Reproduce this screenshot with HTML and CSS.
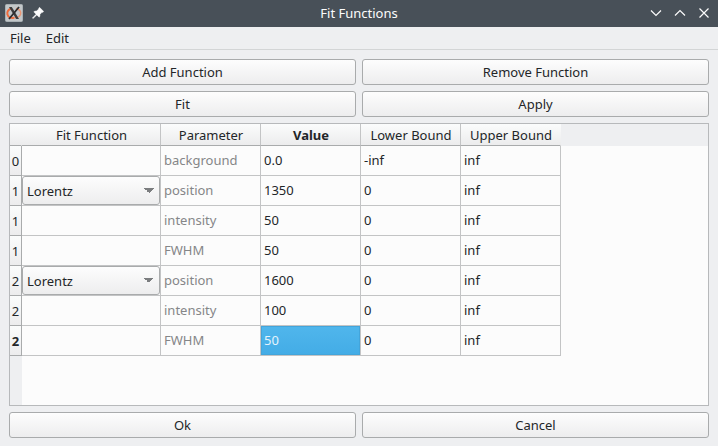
FILE: index.html
```html
<!DOCTYPE html>
<html lang="en">
<head>
<meta charset="utf-8">
<title>Fit Functions</title>
<link rel="stylesheet" href="styles.css">
</head>
<body>
<header class="titlebar">
  <div class="title-group">
    <svg class="app-icon" width="18" height="18" viewBox="0 0 18 18" aria-hidden="true">
      <rect x="0.5" y="0.5" width="17" height="17" rx="1" fill="#c3c7c9" stroke="#a9b0b4"/>
      <path d="M7 4.500C3.500 5 1.800 7.500 2.400 10.300C3 13 6 14.300 9 13.800" fill="none" stroke="#f06a3a" stroke-width="2"/>
      <path d="M11 4.500C14.500 5.200 16.200 7.500 15.600 10C15 12.500 12 14 9 13.800" fill="none" stroke="#ea9472" stroke-width="1.500"/>
      <path d="M4 3H6.800L14 15H11.200Z" fill="#3c3c3e"/>
      <path d="M14 3L4 15" stroke="#2c2c2e" stroke-width="1.800"/>
    </svg>
    <button class="title-button" aria-label="Keep above">
      <svg width="12" height="12" viewBox="0 0 12 12"><path d="M7.500 0.300L11.700 4.500L10.800 5.400L10.200 5.100L7.900 7.400C8.100 8.700 7.800 9.600 7.200 10.200L4.800 7.900L1 11.600L0.400 11L4.100 7.200L1.800 4.800C2.400 4.200 3.400 3.900 4.600 4.100L6.900 1.800L6.600 1.200Z" fill="#fcfcfc" stroke="#fcfcfc" stroke-width="0.500"/></svg>
    </button>
  </div>
  <h1 class="title">Fit Functions</h1>
  <div class="title-group title-group-end">
    <button class="title-button" aria-label="Minimize"><svg width="12" height="12" viewBox="0 0 12 12"><path d="M1 3.500L6 8.500L11 3.500"/></svg></button>
    <button class="title-button" aria-label="Maximize"><svg width="12" height="12" viewBox="0 0 12 12"><path d="M1 8.500L6 3.500L11 8.500"/></svg></button>
    <button class="title-button" aria-label="Close"><svg width="12" height="12" viewBox="0 0 12 12"><path d="M1.500 1.500L10.500 10.500M10.500 1.500L1.500 10.500"/></svg></button>
  </div>
</header>
<nav class="menubar">
  <button class="menu">File</button>
  <button class="menu">Edit</button>
</nav>
<main class="content">
  <div class="actions">
    <button class="button">Add Function</button>
    <button class="button">Remove Function</button>
    <button class="button">Fit</button>
    <button class="button">Apply</button>
  </div>
  <div class="table-frame">
    <table class="grid">
      <colgroup><col class="col-index"><col class="col-function"><col class="col-value" span="4"></colgroup>
      <thead>
        <tr><td class="corner"></td><th scope="col">Fit Function</th><th scope="col">Parameter</th><th scope="col" class="current">Value</th><th scope="col">Lower Bound</th><th scope="col">Upper Bound</th></tr>
      </thead>
      <tbody>
        <tr><th scope="row">0</th><td></td><td class="name">background</td><td>0.0</td><td>-inf</td><td>inf</td></tr>
        <tr><th scope="row">1</th><td class="choice"><select class="combo" aria-label="Fit function 1"><option>Lorentz</option></select></td><td class="name">position</td><td>1350</td><td>0</td><td>inf</td></tr>
        <tr><th scope="row">1</th><td></td><td class="name">intensity</td><td>50</td><td>0</td><td>inf</td></tr>
        <tr><th scope="row">1</th><td></td><td class="name">FWHM</td><td>50</td><td>0</td><td>inf</td></tr>
        <tr><th scope="row">2</th><td class="choice"><select class="combo" aria-label="Fit function 2"><option>Lorentz</option></select></td><td class="name">position</td><td>1600</td><td>0</td><td>inf</td></tr>
        <tr><th scope="row">2</th><td></td><td class="name">intensity</td><td>100</td><td>0</td><td>inf</td></tr>
        <tr><th scope="row" class="current">2</th><td></td><td class="name">FWHM</td><td class="selected">50</td><td>0</td><td>inf</td></tr>
      </tbody>
    </table>
    <div class="header-rest"></div>
    <div class="index-rest"></div>
  </div>
  <div class="actions">
    <button class="button">Ok</button>
    <button class="button">Cancel</button>
  </div>
</main>
</body>
</html>
```
FILE: styles.css
```css
* {
  box-sizing: border-box;
}

body {
  display: flex;
  flex-direction: column;
  min-height: 100vh;
  margin: 0;
  background: #eeeff1;
  color: #232629;
  font: 13px/18px "Noto Sans", sans-serif;
}

button,
select {
  font: inherit;
  color: inherit;
}

.titlebar {
  display: grid;
  grid-template-columns: 1fr auto 1fr;
  align-items: center;
  height: 27px;
  padding: 0 8px 2px;
  background: #485058;
  color: #fcfcfc;
}

.title-group {
  display: flex;
  align-items: center;
  gap: 9px;
  margin-left: -3px;
}

.title-group-end {
  justify-content: flex-end;
  gap: 12px;
  margin-left: 0;
}

.title {
  margin: 0;
  font-size: 13px;
  font-weight: 400;
}

.title-button {
  display: flex;
  padding: 0;
  border: 0;
  background: none;
}

.title-group-end path {
  fill: none;
  stroke: #fcfcfc;
  stroke-width: 1.2;
}

.menubar {
  display: flex;
  height: 23px;
  padding: 0 2px;
  border-bottom: 1px solid #d3d5d6;
}

.menu {
  padding: 0 8px;
  border: 0;
  background: none;
}

.menu + .menu {
  padding-left: 7px;
}

.content {
  flex: 1;
  display: flex;
  flex-direction: column;
  gap: 6px;
  padding: 9px 9px 8px;
}

.actions {
  display: grid;
  grid-template-columns: 1fr 1fr;
  gap: 6px;
}

.button {
  height: 26px;
  padding: 0 8px;
  border: 1px solid #a9abac;
  border-radius: 3px;
  background: linear-gradient(#fdfdfd, #ededee);
}

.table-frame {
  flex: 1;
  display: grid;
  grid-template-columns: auto 1fr;
  grid-template-rows: 22px auto 1fr;
  border: 1px solid #b7b9bb;
  background: #fcfcfc;
}

.grid {
  grid-row: 1 / 3;
  width: 551px;
  table-layout: fixed;
  border-collapse: separate;
  border-spacing: 0;
}

.col-index {
  width: 12px;
}

.col-function {
  width: 139px;
}

.col-value {
  width: 100px;
}

.grid th,
.grid td {
  padding: 0;
  font-weight: 400;
  border: solid #c3c4c5;
  border-width: 0 1px 1px 0;
}

.grid thead th,
.grid .corner {
  height: 22px;
  background: linear-gradient(#fbfcfc, #ececed);
  border-bottom-color: #a9abac;
}

.grid thead th {
  padding-left: 1px;
}

.grid .corner,
.grid thead th:last-child {
  border-right-color: transparent;
}

.grid .current {
  font-weight: 700;
}

.grid tbody th {
  height: 30px;
  background: linear-gradient(#fbfcfc, #ececed);
  border-color: #a9abac;
}

.grid tbody td {
  height: 30px;
  padding: 0 0 2px 3px;
}

.grid .name {
  color: #858688;
}

.grid .selected {
  background: linear-gradient(#50b6ec, #43ace6) padding-box;
  box-shadow: inset 0 0 0 1px #43a5db;
  color: #e4f3fc;
}

.grid tbody .choice {
  padding: 0;
}

.combo {
  display: block;
  width: 100%;
  height: 29px;
  padding: 0 24px 0 4px;
  border: 1px solid #a9abac;
  border-radius: 3px;
  appearance: none;
  background:
    linear-gradient(to bottom left, #7b7d7f 50%, transparent 50%) right 10px top 11px / 5px 5px no-repeat,
    linear-gradient(to bottom right, #7b7d7f 50%, transparent 50%) right 5px top 11px / 5px 5px no-repeat,
    linear-gradient(#fdfdfd, #ededee);
}

.header-rest {
  background: #eeeff1;
}

.index-rest {
  grid-row: 3;
  grid-column: 1;
  width: 12px;
  background: #eeeff1;
}
```
